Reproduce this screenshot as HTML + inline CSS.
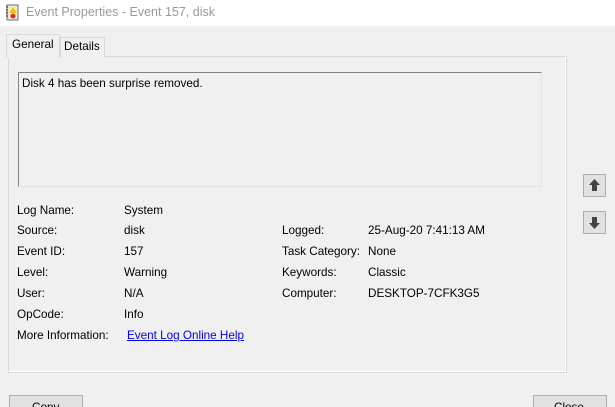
<!DOCTYPE html>
<html style="overflow:hidden"><head><style>
html,body{margin:0;width:615px;height:407px;overflow:hidden}
body{background:#f0f0f0;font-family:"Liberation Sans",sans-serif;font-size:11.7px;color:#000;position:relative}
.a{position:absolute;white-space:nowrap}
.title{position:absolute;left:0;top:0;width:615px;height:26px;background:#fff}
.panel{position:absolute;left:8px;top:56px;width:557px;height:315px;background:#f0f0f0;border:1px solid #d9d9d9;box-shadow:inset -1px -1px 0 #fff}
.btn{position:absolute;background:#e1e1e1;border:1px solid #adadad;box-sizing:border-box}
</style></head><body>
<div class="title"></div>
<svg class="a" style="left:5px;top:4px" width="14" height="17" viewBox="0 0 14 17">
<rect x="2" y="1" width="11" height="15" fill="#f4e9c8" stroke="#6a6a8a"/>
<g stroke="#333" stroke-width="1"><line x1="1" y1="3" x2="3" y2="3"/><line x1="1" y1="6" x2="3" y2="6"/><line x1="1" y1="9" x2="3" y2="9"/><line x1="1" y1="12" x2="3" y2="12"/></g>
<polygon points="8,3 12,9 4,9" fill="#f2c200"/><circle cx="8" cy="12" r="2.5" fill="#d03030"/></svg>
<div class="a" style="left:26px;top:5px;font-size:12.5px;color:#999">Event Properties - Event 157, disk</div>
<div class="panel"></div>
<div class="a" style="left:60px;top:37px;width:43px;height:19px;background:#f0f0f0;border:1px solid #d9d9d9;border-bottom:none"></div>
<div class="a" style="left:64px;top:40px">Details</div>
<div class="a" style="left:6px;top:34px;width:52px;height:23px;background:#f0f0f0;border:1px solid #d9d9d9;border-bottom:none"></div>
<div class="a" style="left:12px;top:38px">General</div>
<div class="a" style="left:18px;top:72px;width:522px;height:113px;background:#f0f0f0;border-top:1px solid #828282;border-left:1px solid #828282;border-right:1px solid #e3e3e3;border-bottom:1px solid #e3e3e3"></div>
<div class="a" style="left:22px;top:77px">Disk 4 has been surprise removed.</div>
<div class="a" style="left:17px;top:204px">Log Name:</div><div class="a" style="left:124px;top:204px">System</div>
<div class="a" style="left:17px;top:224px">Source:</div><div class="a" style="left:124px;top:224px">disk</div>
<div class="a" style="left:17px;top:245px">Event ID:</div><div class="a" style="left:124px;top:245px">157</div>
<div class="a" style="left:17px;top:266px">Level:</div><div class="a" style="left:124px;top:266px">Warning</div>
<div class="a" style="left:17px;top:287px">User:</div><div class="a" style="left:124px;top:287px">N/A</div>
<div class="a" style="left:17px;top:308px">OpCode:</div><div class="a" style="left:124px;top:308px">Info</div>
<div class="a" style="left:17px;top:329px">More Information:</div><div class="a" style="left:127px;top:329px;color:#0000ee;text-decoration:underline">Event Log Online Help</div>
<div class="a" style="left:282px;top:224px">Logged:</div><div class="a" style="left:368px;top:224px">25-Aug-20 7:41:13 AM</div>
<div class="a" style="left:282px;top:245px">Task Category:</div><div class="a" style="left:368px;top:245px">None</div>
<div class="a" style="left:282px;top:266px">Keywords:</div><div class="a" style="left:368px;top:266px">Classic</div>
<div class="a" style="left:282px;top:287px">Computer:</div><div class="a" style="left:368px;top:287px">DESKTOP-7CFK3G5</div>
<div class="btn" style="left:583px;top:174px;width:23px;height:23px"><svg width="21" height="21" viewBox="0 0 21 21"><polygon points="10.5,4 16,10 13,10 13,16 8,16 8,10 5,10" fill="#444"/></svg></div>
<div class="btn" style="left:583px;top:211px;width:23px;height:23px"><svg width="21" height="21" viewBox="0 0 21 21"><polygon points="10.5,17 16,11 13,11 13,5 8,5 8,11 5,11" fill="#444"/></svg></div>
<div class="btn" style="left:9px;top:395px;width:74px;height:24px"><div class="a" style="left:22px;top:5px">Copy</div></div>
<div class="btn" style="left:533px;top:395px;width:74px;height:24px"><div class="a" style="left:20px;top:5px">Close</div></div>
</body></html>
